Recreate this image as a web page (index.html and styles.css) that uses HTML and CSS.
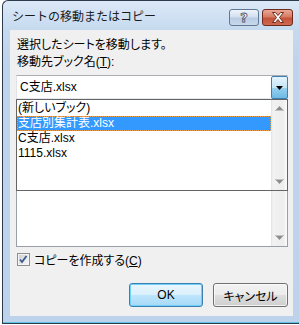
FILE: index.html
```html
<!DOCTYPE html>
<html lang="ja">
<head>
    <meta charset="UTF-8">
    <title>シートの移動またはコピー</title>
    <link rel="stylesheet" href="styles.css">
</head>
<body>
    <div class="window">
        <!-- title bar -->
        <div class="titlebar">
            <span class="title">シートの移動またはコピー</span>
            <div class="caption-btns">
                <span class="cap help">?</span>
                <span class="cap close">
                    <svg width="14" height="11" viewBox="0 0 14 11"><path d="M1.5 0.5h3l2.5 3 2.5-3h3l-4 5 4 5h-3l-2.5-3-2.5 3h-3l4-5z" fill="#fff" stroke="#6e2a1c" stroke-width="1"/></svg>
                </span>
            </div>
        </div>

        <!-- dialog body -->
        <div class="client">
            <p class="line">選択したシートを移動します。</p>
            <p class="line">移動先ブック名(<u>T</u>):</p>

            <div class="combo-wrap">
                <div class="combo">
                    <span class="combo-text">C支店.xlsx</span>
                    <span class="combo-btn">
                        <svg width="7" height="4" viewBox="0 0 7 4"><path d="M0 0h7L3.5 4z" fill="#000"/></svg>
                    </span>
                </div>
                <!-- open drop-down list -->
                <div class="dropdown">
                    <div class="items">
                        <div class="item">(新しいブック)</div>
                        <div class="item sel">支店別集計表.xlsx</div>
                        <div class="item">C支店.xlsx</div>
                        <div class="item">1115.xlsx</div>
                    </div>
                    <div class="scroll">
                        <span class="arrow"><svg width="9" height="5" viewBox="0 0 9 5"><path d="M4.5 0L9 5H0z" fill="#8c8c8c"/><path d="M1 4.5h7" stroke="#c4c4c4"/></svg></span>
                        <span class="arrow"><svg width="9" height="5" viewBox="0 0 9 5"><path d="M0 0h9L4.5 5z" fill="#8c8c8c"/><path d="M1 0.5h7" stroke="#c4c4c4"/></svg></span>
                    </div>
                </div>
            </div>

            <div class="listbox">
                <div class="scroll">
                    <span class="arrow"><svg width="9" height="5" viewBox="0 0 9 5"><path d="M4.5 0L9 5H0z" fill="#8c8c8c"/></svg></span>
                    <span class="arrow"><svg width="9" height="5" viewBox="0 0 9 5"><path d="M0 0h9L4.5 5z" fill="#8c8c8c"/><path d="M1 0.5h7" stroke="#c4c4c4"/></svg></span>
                </div>
            </div>

            <label class="check">
                <svg width="13" height="13" viewBox="0 0 13 13">
                    <defs>
                        <linearGradient id="cb" x1="0" y1="0" x2="1" y2="1">
                            <stop offset="0" stop-color="#cbcfd5"/>
                            <stop offset="1" stop-color="#f7f7f7"/>
                        </linearGradient>
                    </defs>
                    <rect x="0.5" y="0.5" width="12" height="12" fill="#f4f4f4" stroke="#8e8f8f"/>
                    <rect x="2" y="2" width="9" height="9" fill="url(#cb)"/>
                    <path d="M3 6.5l2 2.5 4.5-6" fill="none" stroke="#3d5a8c" stroke-width="1.8"/>
                </svg>
                <span>コピーを作成する(<u>C</u>)</span>
            </label>

            <div class="buttons">
                <button class="btn default">OK</button>
                <button class="btn">キャンセル</button>
            </div>
        </div>
    </div>
</body>
</html>
```

FILE: styles.css
```css
* {
    box-sizing: border-box;
}
body {
    margin: 0;
    background: #fff;
    font-family: "Liberation Sans", "Noto Sans CJK JP", sans-serif;
    font-size: 12px;
    color: #000;
}
.window {
    margin-left: 2px;
    width: 297px;
    height: 324px;
    border: 1px solid #2c3b4c;
    border-right: none;
    border-top-left-radius: 6px;
    background: linear-gradient(#dce9f7 0, #c6daef 28px, #bed4ec 60px, #bcd3eb 100%);
    box-shadow: inset 0 -1px 0 #5fc3e6;
    display: flex;
    flex-direction: column;
    padding: 0 6px 7px 7px;
}
.titlebar {
    height: 29px;
    display: flex;
    align-items: flex-start;
    justify-content: space-between;
}
.title {
    margin: 8px 0 0 2px;
    line-height: 17px;
    color: #1a1a1a;
}
.caption-btns {
    display: flex;
    gap: 3px;
    margin-top: 8px;
}
.cap {
    width: 30px;
    height: 17px;
    border-radius: 3px;
    display: flex;
    align-items: center;
    justify-content: center;
}
.help {
    border: 1px solid #5f7894;
    background: linear-gradient(#eef3fa 0, #d3e0ef 45%, #b9cce3 55%, #c9d9ec 100%);
    color: #fff;
    font-family: "DejaVu Sans", sans-serif;
    font-weight: bold;
    font-size: 13px;
    -webkit-text-stroke: 0.8px #42546a;
    line-height: 15px;
}
.close {
    width: 31px;
    border: 1px solid #6e2a1c;
    background: linear-gradient(#eaa896 0, #d77c64 45%, #c5513a 55%, #cf6a50 100%);
}
.client {
    flex: 1;
    background: #f0f0f0;
    padding: 7px 5px 0 6px;
    display: flex;
    flex-direction: column;
    font-feature-settings: "palt";
}
.line {
    margin: 0;
    padding-left: 1px;
    line-height: 17px;
}
.combo-wrap {
    position: relative;
    margin-top: 4px;
}
.combo {
    display: flex;
    height: 24px;
    background: #fff;
    border: 1px solid;
    border-color: #abadb3 #dbdfe6 #e3e9ef #e2e3ea;
}
.combo-text {
    flex: 1;
    padding-left: 3px;
    line-height: 22px;
}
.combo-btn {
    width: 17px;
    margin: 0 -1px -1px 0;
    border: 1px solid #3c7fb1;
    border-radius: 2px;
    background: linear-gradient(#e5f4fc 0, #c4e5f6 50%, #98d1ef 51%, #6dbae4 100%);
    display: flex;
    align-items: center;
    justify-content: center;
}
.dropdown {
    position: absolute;
    top: 24px;
    left: 0;
    width: 272px;
    height: 92px;
    border: 1px solid #646464;
    background: #fff;
    display: flex;
    z-index: 2;
}
.items {
    flex: 1;
    padding-top: 1px;
}
.item {
    height: 15px;
    line-height: 15px;
    padding-left: 1px;
    white-space: nowrap;
}
.item.sel {
    background: #3399ff;
    color: #fff;
    outline: 1px dotted #e59a4c;
    outline-offset: -1px;
}
.scroll {
    width: 16px;
    background: linear-gradient(to right, #e2e2e2 0, #f2f2f2 2px, #ededed 12px, #fbfbfb 100%);
    display: flex;
    flex-direction: column;
    justify-content: space-between;
}
.arrow {
    height: 17px;
    display: flex;
    align-items: center;
    justify-content: center;
}
.listbox {
    margin-top: 18px;
    height: 130px;
    border: 1px solid #9a9ea6;
    background: #fff;
    display: flex;
    justify-content: flex-end;
}
.check {
    margin-top: 4px;
    height: 17px;
    padding-left: 1px;
    display: flex;
    align-items: center;
    gap: 4px;
}
.buttons {
    margin-top: 15px;
    display: flex;
    justify-content: flex-end;
    gap: 10px;
}
.btn {
    width: 75px;
    height: 24px;
    padding: 0;
    font: inherit;
    color: #000;
    border: 1px solid #707070;
    border-radius: 3px;
    background: linear-gradient(#f2f2f2 0, #ebebeb 50%, #dddddd 51%, #cfcfcf 100%);
    box-shadow: inset 0 0 0 1px rgba(255, 255, 255, 0.7);
}
.btn.default {
    width: 74px;
    border-color: #3c7fb1;
    background: linear-gradient(#eaf6fd 0, #d9f0fc 50%, #bee6fd 51%, #a7d9f5 100%);
    box-shadow: inset 0 0 0 1px #6fd1f9;
}
```
